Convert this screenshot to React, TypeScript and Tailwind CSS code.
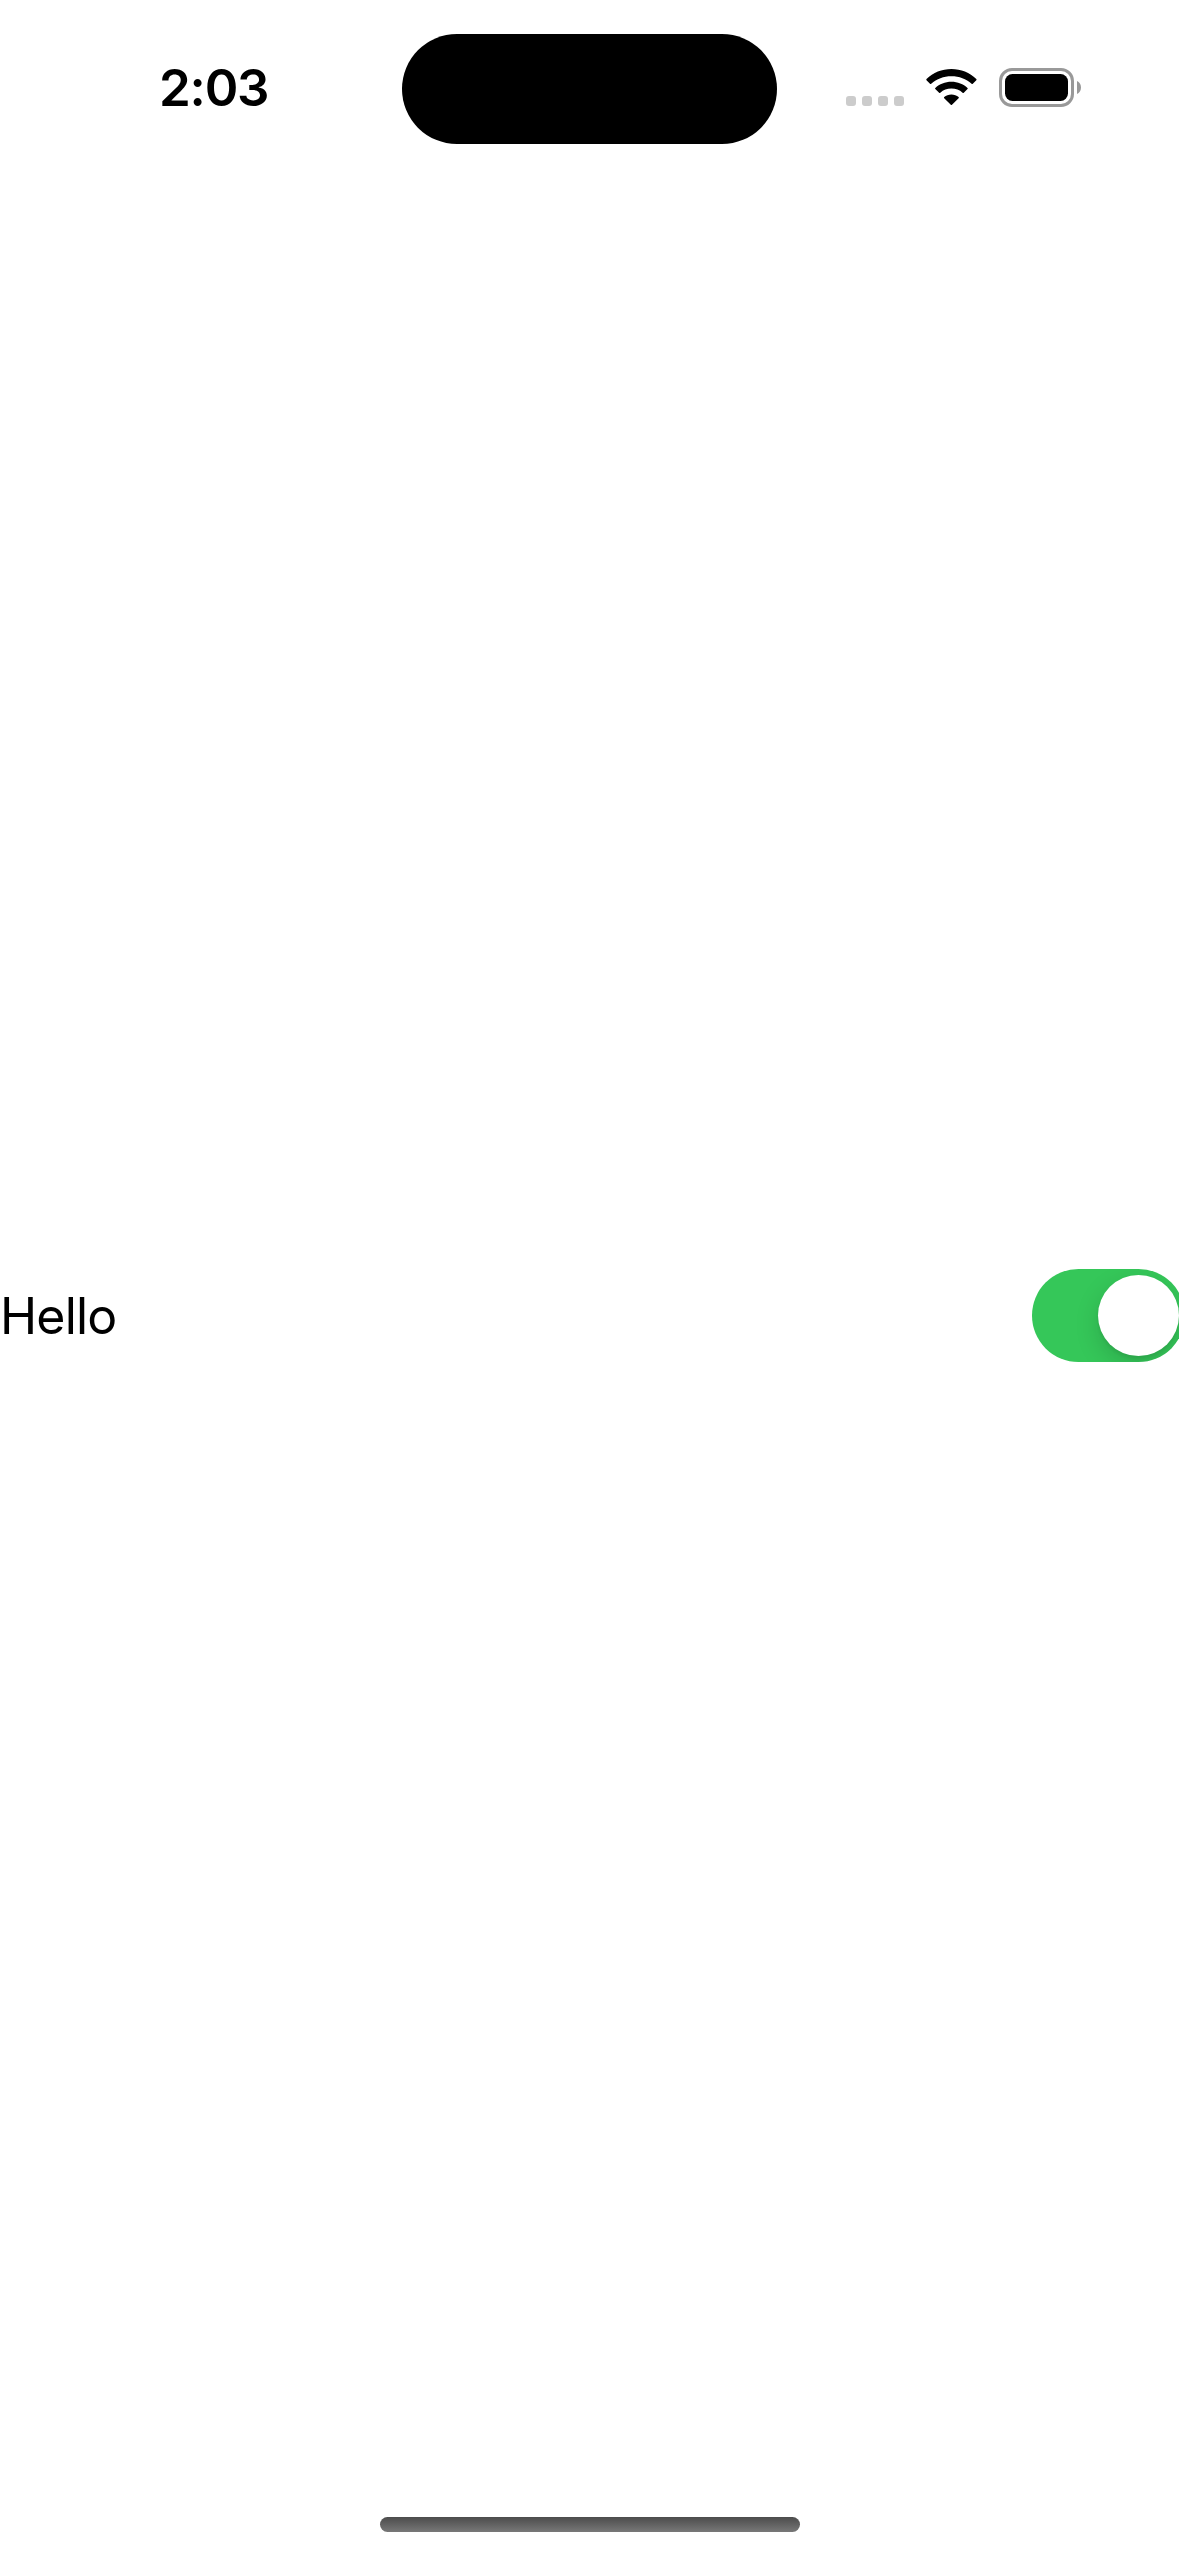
function StatusIcons() {
  return (
    <div className="mt-[68px] ml-[69px] flex h-[39px] items-start">
      <div className="mt-7 flex gap-1.5">
        <span className="size-2.5 rounded-[3px] bg-[#cccccc]" />
        <span className="size-2.5 rounded-[3px] bg-[#cccccc]" />
        <span className="size-2.5 rounded-[3px] bg-[#cccccc]" />
        <span className="size-2.5 rounded-[3px] bg-[#cccccc]" />
      </div>
      <svg className="mt-px ml-[22px] h-[37px] w-[51px]" viewBox="0 0 51 37" fill="black">
        <path d="M25.4 0C35 0 43.8 3.6 50.3 10Q50.9 10.6 50.3 11.2L46.8 14.8Q46.2 15.4 45.6 14.8C40.1 9.8 33.3 7.2 25.4 7.2S10.8 9.8 5.2 14.8Q4.6 15.4 4 14.8L.5 11.2Q0 10.6.5 10C7.1 3.6 15.9 0 25.4 0Z" />
        <path d="M25.4 12.7C31.7 12.7 37.3 15 41.5 18.9Q42.1 19.5 41.5 20.1L37.8 23.7Q37.2 24.3 36.6 23.8C33.5 21 29.8 19.6 25.4 19.6S17.4 21 14.3 23.8Q13.7 24.3 13.1 23.7L9.3 20.1Q8.7 19.5 9.3 18.9C13.5 15 19.1 12.7 25.4 12.7Z" />
        <path d="M25.4 25.4C28.2 25.4 30.7 26.4 32.6 28Q33.2 28.6 32.6 29.2L26 35.8Q25.4 36.4 24.8 35.8L18.2 29.2Q17.6 28.6 18.2 28C20.1 26.4 22.6 25.4 25.4 25.4Z" />
      </svg>
      <div className="ml-[22px] h-[39px] w-[75px] rounded-[13px] border-3 border-[#999999] p-[3px]">
        <div className="h-[27px] w-[63px] rounded-[7.5px] bg-black" />
      </div>
      <svg className="mt-[13px] ml-[3px] h-[13px] w-1" viewBox="0 0 4 13">
        <path d="M0 0C2.4 1 4 3.5 4 6.5S2.4 12 0 13Z" fill="#999999" />
      </svg>
    </div>
  );
}

function StatusBar() {
  return (
    <header className="flex h-[177px] w-full items-start">
      <time className="mt-[57px] ml-[159px] w-[243px] font-[Inter] text-[51px] leading-[62px] font-semibold tracking-[-1.2px]">
        2:03
      </time>
      <div className="mt-[34px] h-[110px] w-[375px] shrink-0 rounded-full bg-black" />
      <StatusIcons />
    </header>
  );
}

export default function App() {
  return (
    <div className="flex h-[2556px] w-[1179px] flex-col overflow-hidden bg-white text-black">
      <StatusBar />
      <main className="flex flex-1 flex-col pt-[1092px]">
        <div className="flex h-[93px] w-full items-center">
          <span className="w-[1032px] shrink-0 font-[Inter] text-[50px] leading-[60px] tracking-[-0.8px]">
            Hello
          </span>
          <button
            type="button"
            role="switch"
            aria-checked="true"
            aria-label="Hello"
            className="flex h-[93px] w-[153px] shrink-0 items-center justify-end overflow-hidden rounded-full bg-[#35c759] pr-1.5"
          >
            <span className="size-[81px] rounded-full bg-white shadow-[0_9px_24px_rgba(0,0,0,0.15),0_3px_3px_rgba(0,0,0,0.06)]" />
          </button>
        </div>
      </main>
      <footer className="flex justify-center pb-6">
        <div className="h-[15px] w-[420px] rounded-full bg-linear-to-b from-[#4c4c4c] to-[#787878]" />
      </footer>
    </div>
  );
}
